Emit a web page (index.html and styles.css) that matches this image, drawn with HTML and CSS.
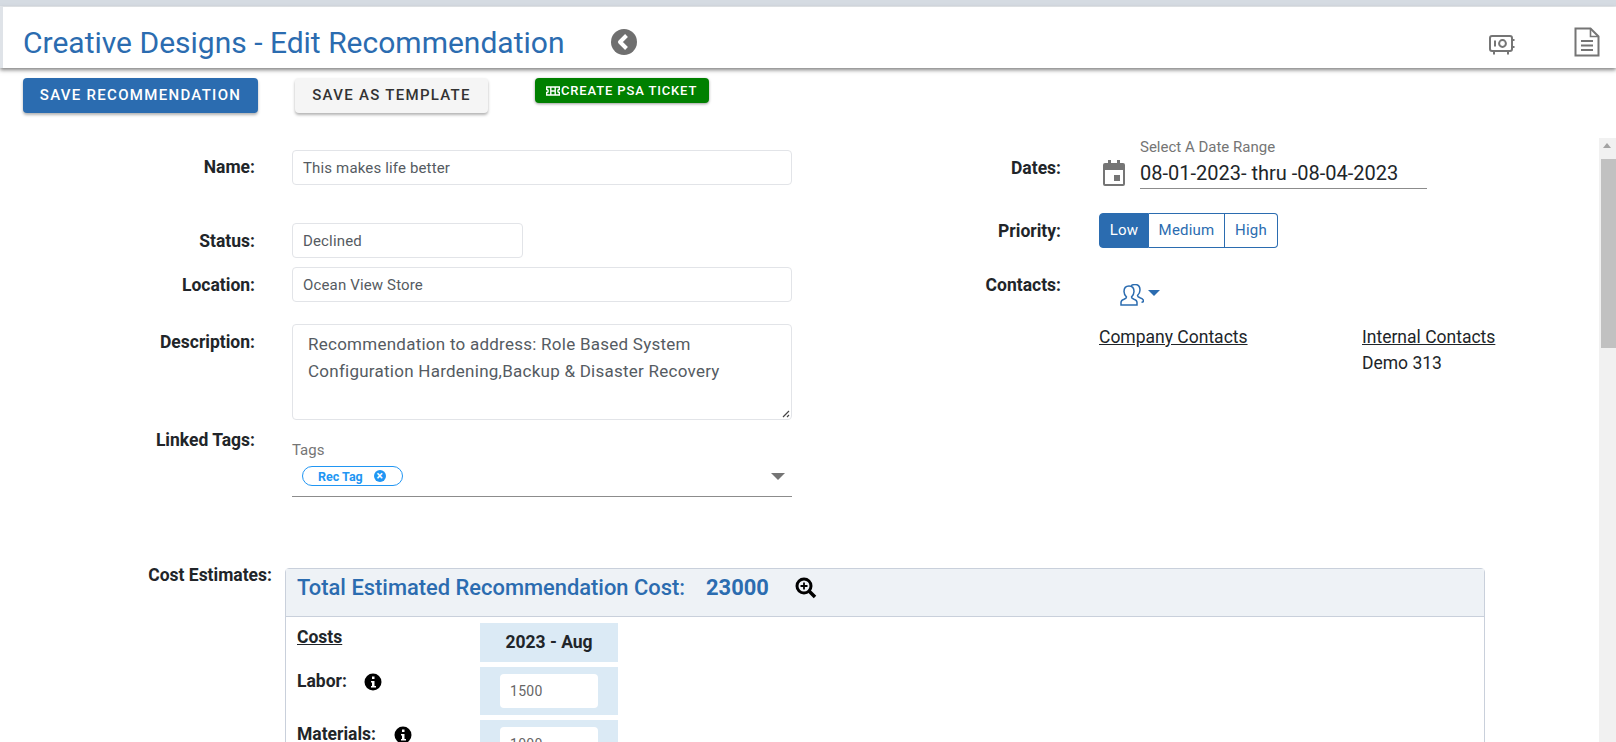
FILE: index.html
```html
<!DOCTYPE html>
<html lang="en">
<head>
<meta charset="utf-8">
<title>Creative Designs - Edit Recommendation</title>
<link rel="stylesheet" href="styles.css">
</head>
<body>
<div class="page">
  <header class="topbar">
    <h1 class="title">Creative Designs - Edit Recommendation</h1>
    <svg class="back" viewBox="0 0 26 26"><circle cx="13" cy="13" r="13" fill="#6f6f6f"/><path d="M15.500 6.500 9 13l6.500 6.500" fill="none" stroke="#fff" stroke-width="4" stroke-linejoin="round"/></svg>
    <div class="top-icons">
      <svg class="safe" viewBox="0 0 26 20" fill="none" stroke="#757575" stroke-width="2"><rect x="1" y="1" width="22" height="15" rx="2"/><path d="M6 5.500v6"/><circle cx="13.500" cy="8.500" r="3.400"/><path d="M23 5h2.500M23 12h2.500" stroke-width="1.800"/><path d="M5 16v3.500M19 16v3.500"/></svg>
      <svg class="doc" viewBox="0 0 26 30" fill="none" stroke="#757575" stroke-width="2"><path d="M1.500 1.500h15l8 8v19h-23z"/><path d="M16.500 1.500v8h8" stroke-width="1.600"/><path d="M7 14h12M7 18.500h12M7 23h12"/></svg>
    </div>
  </header>
  <div class="actions">
    <button class="btn btn-primary">SAVE RECOMMENDATION</button>
    <button class="btn btn-light">SAVE AS TEMPLATE</button>
    <button class="btn-psa"><svg class="ticket" viewBox="0 0 14 12" fill="none" stroke="#fff" stroke-width="1.400"><path d="M.7 2h12.600v2.500a1.500 1.500 0 0 0 0 3V10H.7V7.500a1.500 1.500 0 0 0 0-3z"/><path d="M4.800 2v8M9.200 2v8M4.800 6h4.400"/></svg>CREATE PSA TICKET</button>
  </div>
  <div class="workspace">
    <main class="form">
      <div class="form-top">
        <section class="col-left">
          <div class="row row-name"><label class="lbl">Name:</label><div class="input wide">This makes life better</div></div>
          <div class="row row-status"><label class="lbl lbl-down">Status:</label><div class="input narrow">Declined</div></div>
          <div class="row row-location"><label class="lbl lbl-down">Location:</label><div class="input wide">Ocean View Store</div></div>
          <div class="row row-desc"><label class="lbl">Description:</label>
            <div class="textarea">Recommendation to address: Role Based System Configuration Hardening,Backup &amp; Disaster Recovery
              <svg class="grip" viewBox="0 0 10 10"><path d="M9 3 3 9M9 7 7 9" stroke="#444" stroke-width="1.200" fill="none"/></svg>
            </div>
          </div>
          <div class="row row-tags"><label class="lbl">Linked Tags:</label>
            <div class="tags">
              <div class="tags-label">Tags</div>
              <div class="tags-field">
                <span class="chip">Rec Tag<span class="chip-x">×</span></span>
                <span class="caret-gray"></span>
              </div>
            </div>
          </div>
        </section>
        <section class="col-right">
          <div class="row row-dates"><label class="lbl lbl-r">Dates:</label>
            <svg class="cal" viewBox="0 0 22 26"><path fill="#757575" fill-rule="evenodd" d="M2 3h3V0h3v3h6V0h3v3h3a2 2 0 0 1 2 2v19a2 2 0 0 1-2 2H2a2 2 0 0 1-2-2V5a2 2 0 0 1 2-2zm0 7v14h18V10z"/><rect x="11" y="15" width="6" height="6" fill="#757575"/></svg>
            <div class="dates">
              <div class="dates-label">Select A Date Range</div>
              <div class="dates-value">08-01-2023- thru -08-04-2023</div>
            </div>
          </div>
          <div class="row row-priority"><label class="lbl lbl-r lbl-down">Priority:</label>
            <div class="seg"><span class="seg-item seg-on">Low</span><span class="seg-item seg-mid">Medium</span><span class="seg-item seg-high">High</span></div>
          </div>
          <div class="row row-contacts"><label class="lbl lbl-r">Contacts:</label>
            <div class="contacts">
              <div class="contacts-btn">
                <svg class="people" viewBox="0 0 24 22" fill="none" stroke="#2b6cb0" stroke-width="1.500"><path d="M1 21v-2.500c0-1.500 1-2.500 3-3.200 1.500-.6 2.500-1.300 2.500-2.300C5 11.500 4 10 4 7.500 4 4 6 2 9 2s5 2 5 5.500c0 2.500-1 4-2.500 5.500 0 1 1 1.700 2.500 2.300 2 .7 3 1.700 3 3.200V21z"/><path d="M11 1.800C12 .9 13.500.5 15 .5c3 0 5 2 5 5.500 0 2.500-1 4-2.500 5.500 0 1 1 1.700 2.500 2.300 2 .7 3.500 1.300 3.500 3 0 1-.8 1.500-2 1.500"/></svg>
                <span class="caret-blue"></span>
              </div>
              <div class="contacts-cols">
                <div class="contacts-col"><u>Company Contacts</u></div>
                <div class="contacts-col"><u>Internal Contacts</u><div class="contact-name">Demo 313</div></div>
              </div>
            </div>
          </div>
        </section>
      </div>
      <div class="row row-cost"><label class="lbl lbl-cost">Cost Estimates:</label>
        <div class="card">
          <div class="card-head"><span class="total">Total Estimated Recommendation Cost:</span><span class="amount">23000</span>
            <svg class="zoom" viewBox="0 0 22 22" fill="none" stroke="#000"><circle cx="9" cy="9" r="7" stroke-width="3"/><path d="m14 14 6 6" stroke-width="3.500"/><path d="M5.500 9h7M9 5.500v7" stroke-width="1.800"/></svg>
          </div>
          <div class="card-body">
            <div class="cost-labels">
              <div class="cost-l cost-title">Costs</div>
              <div class="cost-l cost-labor">Labor:<svg class="info info-labor" viewBox="0 0 18 18"><circle cx="9" cy="9" r="8.500" fill="#000"/><path d="M8 3.500h2.500v2.500H8zM7 8h3.500v5H12v1.500H7V13h1v-3.500H7z" fill="#fff"/></svg></div>
              <div class="cost-l cost-mat">Materials:<svg class="info info-mat" viewBox="0 0 18 18"><circle cx="9" cy="9" r="8.500" fill="#000"/><path d="M8 3.500h2.500v2.500H8zM7 8h3.500v5H12v1.500H7V13h1v-3.500H7z" fill="#fff"/></svg></div>
            </div>
            <div class="cost-col">
              <div class="cell cell-head">2023 - Aug</div>
              <div class="cell cell-in"><div class="cell-input">1500</div></div>
              <div class="cell cell-in"><div class="cell-input">1000</div></div>
            </div>
          </div>
        </div>
      </div>
    </main>
    <div class="scrollbar"><span class="sb-up"></span><span class="sb-thumb"></span></div>
  </div>
</div>
</body>
</html>
```
FILE: styles.css
```css
* { box-sizing: border-box; }
html, body { margin: 0; height: 100%; overflow: hidden; background: #fff; }
body { font-family: Roboto, "Liberation Sans", sans-serif; color: #212529; }
.page { height: 742px; display: flex; flex-direction: column; padding-top: 7px; background: linear-gradient(#d5dbe2 0, #d5dbe2 6px, #fff 7px); }
.topbar { height: 61px; border-left: 3px solid #dfe3e8; background: #fff; display: flex; align-items: center; padding: 9px 0 0 20px; box-shadow: 0 2px 4px rgba(0,0,0,.5); position: relative; }
.title { margin: 2px 0 0; font-size: 30px; font-weight: 400; color: #2b6cb0; line-height: 1; }
.back { width: 26px; height: 26px; margin-left: 47px; }
.top-icons { margin-left: auto; display: flex; align-items: center; }
.safe { width: 26px; height: 20px; margin-top: 5px; }
.doc { width: 26px; height: 30px; margin: 0 16px 0 59px; }
.actions { display: flex; align-items: flex-start; padding: 10px 0 0 23px; height: 70px; flex: none; }
.btn { height: 35px; padding-bottom: 2px; border: 0; border-radius: 4px; font: 500 15px Roboto, sans-serif; letter-spacing: 1.300px; box-shadow: 0 2px 3px rgba(0,0,0,.3); }
.btn-primary { width: 235px; background: #2b6cb0; color: #fff; }
.btn-light { width: 193px; margin-left: 37px; background: #f5f5f5; color: #333; }
.btn-psa { display: flex; align-items: center; width: 174px; height: 25px; margin-left: 47px; padding: 0 0 0 11px; border: 0; border-radius: 4px; background: #008000; color: #fff; font: 500 13px Roboto, sans-serif; letter-spacing: .85px; box-shadow: 0 1px 3px rgba(0,0,0,.4); }
.ticket { width: 14px; height: 12px; margin-right: 1px; }
.workspace { flex: 1; min-height: 0; display: flex; overflow: hidden; }
.form { flex: 1; min-width: 0; }
.form-top { display: flex; height: 430px; }
.col-left { flex: none; width: 800px; }
.col-right { flex: 1; min-width: 0; }
.row { display: flex; }
.lbl { flex: none; width: 255px; text-align: right; font-size: 17.500px; font-weight: 700; color: #212529; line-height: 19px; }
.lbl-down { padding-top: 2px; }
.input { height: 35px; margin-left: 37px; padding: 0 10px; display: flex; align-items: center; font-size: 15px; color: #555b62; border: 1px solid #e2e4e8; border-radius: 4px; letter-spacing: .15px; }
.wide { width: 500px; }
.narrow { width: 231px; }
.row-name { padding-top: 12px; align-items: center; }
.row-status { padding-top: 38px; align-items: center; }
.row-location { padding-top: 9px; align-items: center; }
.row-desc { padding-top: 22px; }
.row-desc .lbl { padding-top: 9px; }
.textarea { position: relative; width: 500px; height: 96px; margin-left: 37px; padding: 6px 15px; border: 1px solid #e2e4e8; border-radius: 4px; font-size: 17px; line-height: 27px; color: #555b62; letter-spacing: .25px; }
.grip { position: absolute; right: 1px; bottom: 1px; width: 10px; height: 10px; }
.row-tags { padding-top: 10px; }
.row-tags .lbl { padding-top: 1px; }
.tags { width: 500px; margin-left: 37px; }
.tags-label { padding-top: 12px; font-size: 15px; line-height: 16px; color: #757575; }
.tags-field { height: 39px; padding: 8px 0 0 10px; display: flex; align-items: flex-start; justify-content: space-between; border-bottom: 1px solid #8c8c8c; }
.chip { display: flex; align-items: center; width: 101px; height: 20px; padding-left: 15px; border: 1px solid #2196f3; border-radius: 10px; font-size: 12.500px; font-weight: 700; color: #2196f3; }
.chip-x { display: flex; align-items: center; justify-content: center; width: 12px; height: 12px; margin-left: 11px; border-radius: 50%; background: #2196f3; color: #fff; font-size: 12px; line-height: 1; }
.caret-gray { width: 0; height: 0; margin: 7px 7px 0 0; border-left: 7px solid transparent; border-right: 7px solid transparent; border-top: 7px solid #757575; }
.lbl-r { width: 261px; }
.row-dates { height: 75px; }
.row-dates .lbl { padding-top: 21px; }
.cal { width: 22px; height: 26px; margin: 22px 15px 0 42px; }
.dates { width: 287px; padding-top: 1px; }
.dates-label { height: 20px; font-size: 15px; line-height: 17px; color: #757575; }
.dates-value { height: 30px; font-size: 20px; line-height: 28px; color: #212529; border-bottom: 1px solid #8c8c8c; }
.row-priority { height: 35px; align-items: center; }
.seg { display: flex; height: 35px; margin-left: 38px; font-size: 15px; letter-spacing: .2px; }
.seg-item { display: flex; align-items: center; justify-content: center; padding-bottom: 1px; border: 1px solid #2b6cb0; color: #2b6cb0; }
.seg-on { width: 50px; background: #2b6cb0; color: #fff; border-radius: 4px 0 0 4px; }
.seg-mid { width: 76px; border-left: 0; }
.seg-high { width: 53px; border-left: 0; border-radius: 0 4px 4px 0; }
.row-contacts { padding-top: 28px; }
.contacts { margin-left: 38px; }
.contacts-btn { display: flex; align-items: flex-start; height: 48px; padding: 8px 0 0 21px; }
.people { width: 24px; height: 22px; }
.caret-blue { width: 0; height: 0; margin: 6px 0 0 4px; border-left: 6px solid transparent; border-right: 6px solid transparent; border-top: 6px solid #2b6cb0; }
.contacts-cols { display: flex; font-size: 17.500px; line-height: 26px; color: #212529; }
.contacts-col { width: 263px; }
.row-cost { align-items: flex-start; }
.lbl-cost { width: 272px; margin-top: -2px; }
.card { width: 1200px; margin-left: 13px; border: 1px solid #c9d0db; border-radius: 4px 4px 0 0; }
.card-head { height: 48px; padding: 5px 0 0 11px; display: flex; align-items: flex-start; background: #eef2f6; border-bottom: 1px solid #c9d0db; font-size: 21.900px; line-height: 27px; color: #2b6cb0; font-weight: 500; }
.amount { margin-left: 21px; font-weight: 700; }
.zoom { width: 22px; height: 22px; margin: 3px 0 0 26px; }
.card-body { display: flex; padding: 6px 0 0 11px; }
.cost-labels { width: 183px; }
.cost-l { font-size: 17.500px; font-weight: 700; display: flex; align-items: flex-start; line-height: 19px; }
.cost-title { height: 44px; padding-top: 5px; text-decoration: underline; }
.cost-labor { height: 52px; padding-top: 5px; }
.cost-mat { padding-top: 8px; line-height: 15px; }
.info { width: 18px; height: 18px; margin-top: 1px; }
.info-labor { margin-left: 17px; }
.info-mat { margin: -1px 0 0 18px; }
.cost-col { width: 138px; }
.cell { background: #dbeaf5; margin-bottom: 5px; display: flex; align-items: center; justify-content: center; }
.cell-head { height: 39px; padding-bottom: 2px; font-size: 17.500px; font-weight: 700; }
.cell-in { height: 48px; }
.cell-input { width: 98px; height: 34px; padding-left: 10px; display: flex; align-items: center; background: #fff; border-radius: 4px; font-size: 14px; color: #666; letter-spacing: .3px; }
.scrollbar { flex: none; position: relative; width: 17px; background: #f1f1f1; }
.sb-up { position: absolute; top: 5px; left: 4px; width: 0; height: 0; border-left: 4px solid transparent; border-right: 4px solid transparent; border-bottom: 5px solid #a3a3a3; }
.sb-thumb { position: absolute; top: 21px; left: 2px; right: 0; height: 189px; background: #c1c1c1; }
```
